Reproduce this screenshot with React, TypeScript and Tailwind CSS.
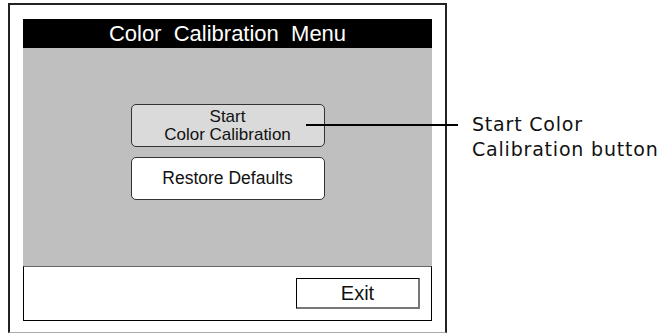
import React from "react";

export default function App() {
  return (
    <div className="relative w-[667px] h-[335px] bg-white overflow-hidden" style={{ fontFamily: '"Liberation Sans", Arial, sans-serif' }}>
      <div className="ml-[8px] mt-[3px] w-[439px] h-[330px] border-l-2 border-t-2 border-r-2 border-b border-l-[#222] border-t-[#222] border-r-[#222] border-b-[#aaa] bg-white pl-[13px] pt-[14px]">
        <div className="w-[409px] flex flex-col">
          <div className="h-[29px] bg-black text-white text-[22px] leading-[29px] text-center whitespace-pre">
            {"Color  Calibration  Menu"}
          </div>
          <div className="h-[218px] bg-[#bfbfbf] flex flex-col items-center pt-[56px] gap-[10px]">
            <div className="w-[194px] h-[43px] rounded-[5px] border border-[#333] bg-[#dadada] flex flex-col items-center justify-center text-[17px] leading-[18px] text-[#111]">
              <span>Start</span>
              <span>Color Calibration</span>
            </div>
            <div className="w-[194px] h-[43px] rounded-[5px] border border-[#333] bg-white flex items-center justify-center text-[17.5px] text-[#111]">
              Restore Defaults
            </div>
          </div>
          <div className="h-[55px] border-l border-r border-b border-t border-black border-t-[#666] bg-white flex items-center justify-end pr-[11px]">
            <div className="w-[124px] h-[31px] border border-black border-r-2 border-b-2 border-r-[#777] border-b-[#777] flex items-center justify-center text-[20px] text-[#111]">
              Exit
            </div>
          </div>
        </div>
      </div>
      <div className="absolute left-[306px] top-[124px] w-[152px] h-[2px] bg-black" />
      <div className="absolute left-[472px] top-[112px] text-[19px] leading-[25px] tracking-[0.8px] text-[#111]" style={{ fontFamily: '"DejaVu Sans", sans-serif' }}>
        <div>Start Color</div>
        <div>Calibration button</div>
      </div>
    </div>
  );
}
